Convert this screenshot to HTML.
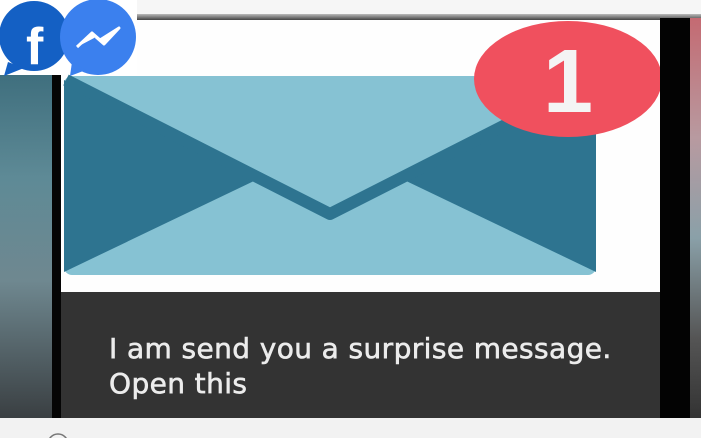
<!DOCTYPE html>
<html><head><meta charset="utf-8"><style>
html,body{margin:0;padding:0;width:701px;height:438px;overflow:hidden;background:#f4f4f4;position:relative;font-family:"Liberation Sans",sans-serif}
div{position:absolute}
</style></head><body>
<div style="left:0;top:0;width:701px;height:15px;background:#f6f6f6"></div>
<div style="left:130px;top:14px;width:571px;height:6px;background:linear-gradient(#bbb,#444)"></div>
<div style="left:0;top:75px;width:53px;height:343px;background:linear-gradient(180deg,#3f6f7e,#5e8a96 30%,#6f8890 60%,#3a3f42)"></div>
<div style="left:52px;top:18px;width:10px;height:400px;background:#050505"></div>
<div style="left:61px;top:20px;width:599px;height:272px;background:#fefefe"></div>
<div style="left:61px;top:292px;width:599px;height:126px;background:#333333"></div>
<div style="left:660px;top:18px;width:30px;height:400px;background:#030303"></div>
<div style="left:690px;top:18px;width:11px;height:400px;background:linear-gradient(180deg,#c46a72,#b89aa0 30%,#8aa0a8 55%,#555 80%,#333)"></div>
<div style="left:0;top:418px;width:701px;height:20px;background:#f2f2f2"></div>
<div style="left:0;top:0;width:137px;height:75px;background:#fff"></div>
<svg style="position:absolute;left:0;top:0" width="701" height="438">
 <rect x="64" y="76" width="532" height="199" rx="8" fill="#86c2d3"/>
 <polygon points="64,80 258,179 64,272" fill="#2e7490"/>
 <polygon points="596,80 402,179 596,272" fill="#2e7490"/>
 <polyline points="66,80 330,214 594,80" fill="none" stroke="#2e7490" stroke-width="12" stroke-linejoin="round"/>
 <clipPath id="c"><rect x="61" y="20" width="599" height="272"/></clipPath>
 <ellipse cx="568" cy="79" rx="94" ry="58" fill="#f0505e" clip-path="url(#c)"/>
 <text x="568" y="112" font-family="Liberation Sans" font-weight="bold" font-size="90" fill="#f4f4f4" text-anchor="middle">1</text>
 <circle cx="34" cy="36" r="35" fill="#1460c4"/>
 <polygon points="8,62 4,76 24,68" fill="#1460c4"/>
 <text x="26" y="64" font-family="Liberation Sans" font-weight="bold" font-size="52" fill="#fff">f</text>
 <circle cx="98" cy="37" r="38" fill="#3b80ee"/>
 <polygon points="72,62 70,76 86,70" fill="#3b80ee"/>
 <polyline points="77,47 92,33 100,40 119,28 104,44 96,37" fill="#fff" stroke="#fff" stroke-width="3" stroke-linejoin="round"/>
 <g font-family="'Comic Sans MS','DejaVu Sans',sans-serif" font-size="28" fill="#ececec" stroke="#ececec" stroke-width="0.6" letter-spacing="0.4">
 <text x="109" y="358">I am send you a surprise message.</text>
 <text x="109" y="393">Open this</text>
 </g>
 <circle cx="58" cy="444" r="10" fill="none" stroke="#777" stroke-width="1.5"/>
</svg>
</body></html>
